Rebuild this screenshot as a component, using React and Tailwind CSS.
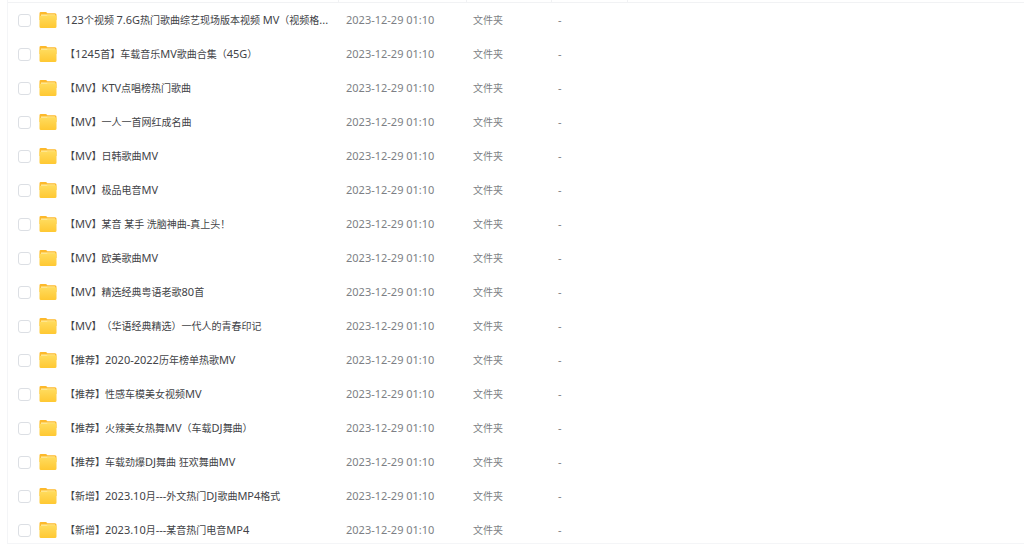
import React from 'react'

const files = [
  "123个视频 7.6G热门歌曲综艺现场版本视频 MV（视频格...",
  "【1245首】车载音乐MV歌曲合集（45G）",
  "【MV】KTV点唱榜热门歌曲",
  "【MV】一人一首网红成名曲",
  "【MV】日韩歌曲MV",
  "【MV】极品电音MV",
  "【MV】某音 某手 洗脑神曲-真上头！",
  "【MV】欧美歌曲MV",
  "【MV】精选经典粤语老歌80首",
  "【MV】（华语经典精选）一代人的青春印记",
  "【推荐】2020-2022历年榜单热歌MV",
  "【推荐】性感车模美女视频MV",
  "【推荐】火辣美女热舞MV（车载DJ舞曲）",
  "【推荐】车载劲爆DJ舞曲 狂欢舞曲MV",
  "【新增】2023.10月---外文热门DJ歌曲MP4格式",
  "【新增】2023.10月---某音热门电音MP4",
];

const FolderIcon = () => (
  <svg className="w-[18px] h-4 shrink-0" viewBox="0 0 18 16" aria-hidden="true">
    <defs>
      <linearGradient id="folder" x1="0" y1="0" x2="0" y2="1">
        <stop offset="0" stopColor="#ffdc5e" />
        <stop offset="1" stopColor="#ffc832" />
      </linearGradient>
    </defs>
    <path d="M1.8 0H6.6Q7.3 0 7.8.6L8.3 1.2H16Q17.5 1.2 17.5 2.7V8H.5V1.4Q.5 0 1.8 0Z" fill="#fdb92b" />
    <path d="M2 2.4H16V5H2Z" fill="#ffe68f" />
    <path d="M.5 3.2Q1 4 2 4H7Q7.8 4 8.3 3.5L8.8 3.2H16.2Q17.5 3.2 17.5 4.5V14.4Q17.5 16 16 16H2Q.5 16 .5 14.4Z" fill="url(#folder)" />
  </svg>
)

// latin letters and digits are set one step larger than the chinese text
const FileName = ({ name }) =>
  name.split(/([\x21-\x7e]+)/).map((part, i) =>
    i % 2 ? <span key={i} className="text-[11px]">{part}</span> : part
  )

const FileRow = ({ name }) => (
  <tr className="group align-top">
    <td className="py-2 group-last:pb-1 pl-2.5">
      <label className="flex items-center h-[18px]">
        <input
          type="checkbox"
          className="appearance-none w-[13px] h-[13px] shrink-0 mr-2 rounded-[3px] border border-[#dcdfe4] bg-white checked:bg-[#06a7ff]"
        />
        <FolderIcon />
        <span className="ml-2 whitespace-nowrap text-[#424347]">
          <FileName name={name} />
        </span>
      </label>
    </td>
    <td className="py-2 group-last:pb-1 pl-[7px] text-[11px] whitespace-nowrap">2023-12-29 01:10</td>
    <td className="py-2 group-last:pb-1 pl-1.5 whitespace-nowrap">文件夹</td>
    <td className="py-2 group-last:pb-1 pl-1.5 text-[11px]">-</td>
    <td></td>
  </tr>
)

const App = () => {
  return (
    <main className="bg-white pl-[7px] pb-[2px] overflow-hidden font-['Noto_Sans','Noto_Sans_CJK_SC',sans-serif] [text-spacing-trim:space-all]">
      <table className="w-full table-fixed border-separate border-spacing-0 border-l border-b border-[#f4f5f7] text-[10px] leading-[18px] text-[#7d7f85]">
        <thead>
          <tr className="h-[3px]">
            <th aria-label="文件名" className="w-[331px] p-0 border-r border-b border-[#f1f2f4]"></th>
            <th aria-label="修改时间" className="w-32 p-0 border-r border-b border-[#f1f2f4]"></th>
            <th aria-label="类型" className="w-[85px] p-0 border-r border-b border-[#f1f2f4]"></th>
            <th aria-label="大小" className="w-[76px] p-0 border-r border-b border-[#f1f2f4]"></th>
            <th className="p-0 border-b border-[#f1f2f4]"></th>
          </tr>
        </thead>
        <tbody>
          {files.map((name) => (
            <FileRow key={name} name={name} />
          ))}
        </tbody>
      </table>
    </main>
  );
}

export default App
